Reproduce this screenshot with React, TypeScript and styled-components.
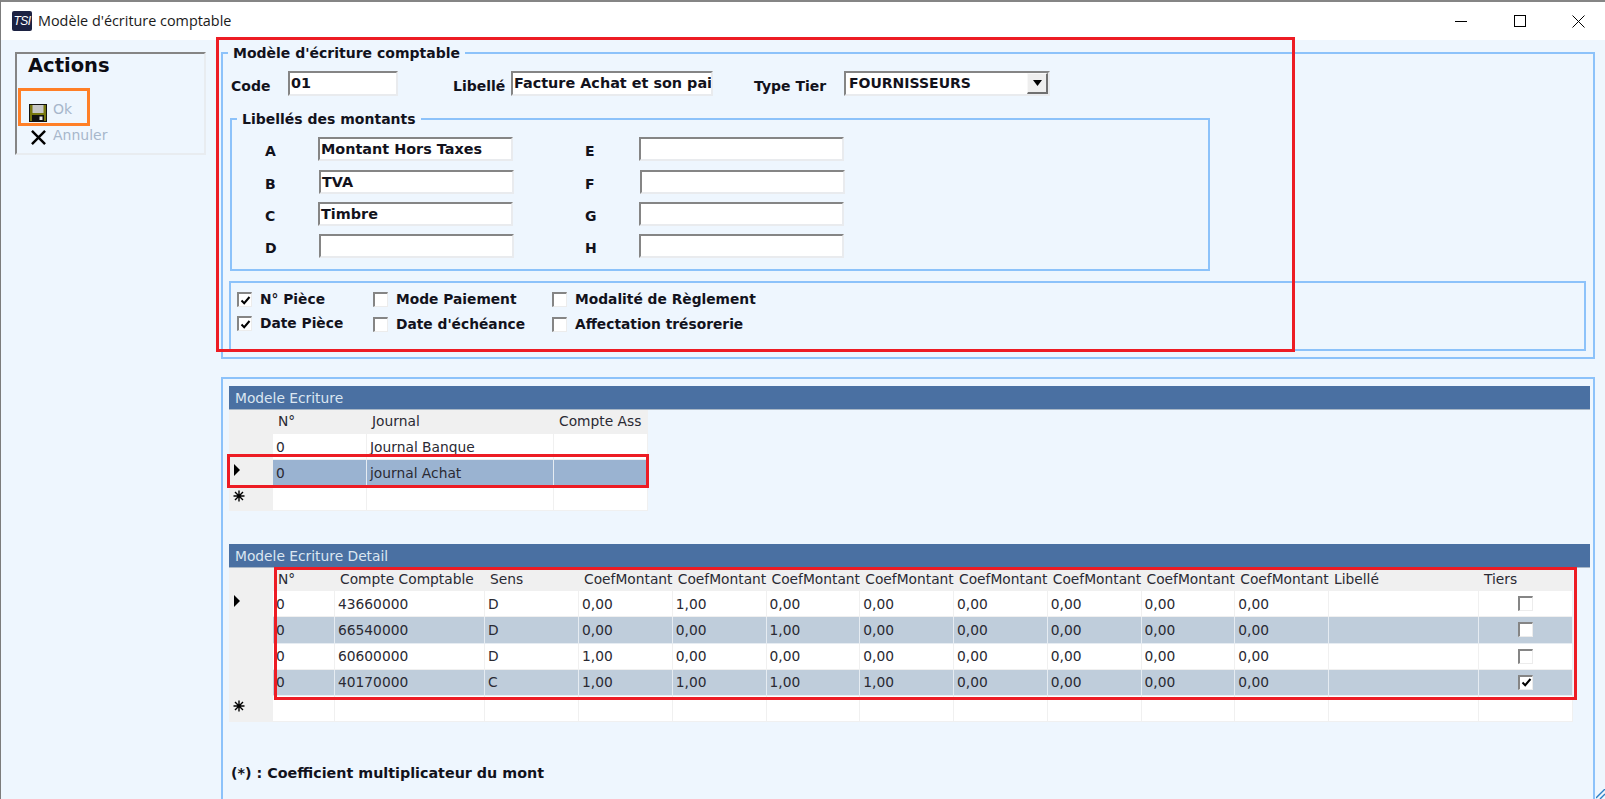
import React from "react";
import styled, { createGlobalStyle } from "styled-components";

const Global = createGlobalStyle`
  html, body { margin: 0; padding: 0; background: #fff; }
  body { font-family: "DejaVu Sans", Verdana, sans-serif; color: #111; }
  * { box-sizing: border-box; }
`;

const Window = styled.div`
  position: relative;
  width: 1605px;
  height: 799px;
  overflow: hidden;
  display: flex;
  flex-direction: column;
  background: #fff;
  border-top: 2px solid #858585;
  border-left: 1px solid #7c7c7c;
`;
const TitleBar = styled.header`
  flex: 0 0 38px;
  display: flex;
  align-items: center;
  padding-left: 11px;
  background: #fff;
`;
const LogoBadge = styled.span`
  width: 20px;
  height: 20px;
  border-radius: 2px;
  background: #1c2242;
  color: #fff;
  font: italic 400 12px/20px "Liberation Sans", sans-serif;
  text-align: center;
  letter-spacing: -0.5px;
`;
const TitleText = styled.span`
  margin-left: 6px;
  font: 400 14.4px/20px "Open Sans", sans-serif;
  color: #1a1a1a;
`;
const Controls = styled.div`
  margin-left: auto;
  margin-right: -3px;
  display: flex;
`;
const Control = styled.span`
  width: 59px;
  height: 38px;
  display: flex;
  align-items: center;
  justify-content: center;
  svg { display: block; }
`;
const Body = styled.div`
  flex: 1;
  min-height: 0;
  display: flex;
  background: #eef6fe;
`;
const Sidebar = styled.aside`
  flex: 0 0 220px;
  padding: 12px 0 0 14px;
`;
const ActionsBox = styled.section`
  width: 191px;
  height: 103px;
  border-style: solid;
  border-width: 2px;
  border-color: #858585 #e8ecf0 #e8ecf0 #858585;
  padding: 0 0 0 11px;
`;
const ActionsTitle = styled.h2`
  margin: 0;
  font: 700 19.5px/24px "DejaVu Sans", sans-serif;
  color: #0c0c14;
`;
const ActionItem = styled.div`
  display: flex;
  align-items: center;
  height: 24px;
  margin-left: 1px;
  font: 400 14px/16px "DejaVu Sans", sans-serif;
  color: #a7b7cb;
  svg { flex: 0 0 auto; }
`;
const ActionsList = styled.div`
  padding-top: 23px;
  display: flex;
  flex-direction: column;
`;
const ActionLabel = styled.span<{ $lift: number }>`
  margin-left: 6px;
  transform: translateY(-${(p) => p.$lift}px);
`;
const IconSlot = styled.span`
  width: 18px;
  height: 18px;
  display: flex;
  align-items: center;
  justify-content: center;
`;
const Main = styled.main`
  flex: 1;
  min-width: 0;
  padding: 12px 10px 0 0;
  display: flex;
  flex-direction: column;
`;
const GroupBox = styled.section`
  position: relative;
  border: 2px solid #8cc2fa;
`;
const Legend = styled.h3`
  position: absolute;
  top: -9px;
  left: 5px;
  margin: 0;
  padding: 0 5px 0 5px;
  background: #eef6fe;
  font: 700 14px/16px "DejaVu Sans", sans-serif;
  color: #12121c;
`;
const FormGroup = styled(GroupBox)`
  height: 307px;
  flex: 0 0 auto;
  padding: 17px 0 0 7px;
`;
const TopRow = styled.div`
  display: flex;
  margin-left: 1px;
  height: 25px;
`;
const FieldLabel = styled.span<{ $width: number; $gap?: number }>`
  flex: 0 0 ${(p) => p.$width}px;
  margin-left: ${(p) => p.$gap ?? 0}px;
  padding-top: 7px;
  font: 700 14px/16px "DejaVu Sans", sans-serif;
  color: #12121c;
`;
const Field = styled.span<{ $width: number; $shift?: number }>`
  flex: 0 0 ${(p) => p.$width}px;
  width: ${(p) => p.$width}px;
  height: 25px;
  margin-left: ${(p) => p.$shift ?? 0}px;
  display: block;
  overflow: hidden;
  white-space: nowrap;
  background: #fff;
  border-style: solid;
  border-width: 2px;
  border-color: #858585 #e9ebee #e9ebee #858585;
  padding: 0 0 0 1px;
  font: 700 14.4px/21px "DejaVu Sans", sans-serif;
  color: #12121c;
`;
const SelectBox = styled.span`
  flex: 0 0 206px;
  height: 25px;
  display: flex;
  justify-content: space-between;
  background: #fff;
  border-style: solid;
  border-width: 2px;
  border-color: #858585 #e9ebee #e9ebee #858585;
  padding-left: 3px;
  font: 700 14px/20px "DejaVu Sans", sans-serif;
  color: #12121c;
`;
const SelectButton = styled.span`
  width: 21px;
  height: 21px;
  background: #eeeeee;
  border-style: solid;
  border-width: 1px 2px 2px 1px;
  border-color: #f8f8f8 #707070 #707070 #f8f8f8;
  display: flex;
  align-items: center;
  justify-content: center;
`;
const AmountsGroup = styled(GroupBox)`
  margin: 22px 0 0 0;
  width: 980px;
  height: 153px;
`;
const AmountsGrid = styled.div`
  display: grid;
  grid-template-columns: 53px 195px 72px 54px 205px;
  grid-template-rows: 33px 32px 32px 24px;
  padding: 17px 0 0 33px;
`;
const AmountLabel = styled.span`
  padding-top: 6px;
  font: 700 14px/16px "DejaVu Sans", sans-serif;
  color: #12121c;
`;
const AmountField = styled(Field)`
  height: 24px;
  line-height: 20px;
`;
const Spacer = styled.span``;
const FlagsGroup = styled(GroupBox)`
  margin: 10px 0 0 -1px;
  width: 1357px;
  height: 70px;
  display: flex;
  padding: 9px 0 0 6px;
`;
const FlagColumn = styled.div<{ $width: number; $gap: number }>`
  flex: 0 0 ${(p) => p.$width}px;
  display: flex;
  flex-direction: column;
  gap: ${(p) => p.$gap}px;
`;
const Flag = styled.div`
  display: flex;
  align-items: center;
  gap: 8px;
  height: 15px;
  font: 700 13.8px/15px "DejaVu Sans", sans-serif;
  color: #12121c;
  white-space: nowrap;
`;
const CheckBox = styled.span`
  flex: 0 0 15px;
  width: 15px;
  height: 15px;
  display: flex;
  align-items: center;
  justify-content: center;
  background: #fff;
  border-style: solid;
  border-width: 2px 1px 1px 2px;
  border-color: #858585 #ececec #ececec #858585;
`;
const GridPanel = styled.section`
  margin-top: 18px;
  flex: 1;
  min-height: 0;
  border-style: solid;
  border-width: 2px 2px 0 2px;
  border-color: #8cc2fa;
  padding: 7px 3px 0 6px;
`;
const GridTitle = styled.div<{ $gap?: number }>`
  height: 24px;
  margin-top: ${(p) => p.$gap ?? 0}px;
  padding-left: 6px;
  background: #4a70a2;
  border-bottom: 1px solid #a9b7c6;
  color: #dbe6f1;
  font: 400 13.8px/25px "DejaVu Sans", sans-serif;
`;
const GridRow = styled.div<{ $cols: string; $h: number }>`
  display: grid;
  grid-template-columns: ${(p) => p.$cols};
  height: ${(p) => p.$h}px;
  width: max-content;
`;
const RowHead = styled.span`
  background: #f0f0f0;
  display: flex;
  align-items: center;
  padding: 0 0 6px 4px;
`;
const HeadCell = styled.span`
  background: #f0f0f0;
  padding-left: 5px;
  font: 400 13.8px/22px "DejaVu Sans", sans-serif;
  color: #2a2a33;
  white-space: nowrap;
`;
const Cell = styled.span<{ $tone: "plain" | "alt" | "selected"; $center?: boolean }>`
  background: ${(p) => (p.$tone === "plain" ? "#fff" : p.$tone === "alt" ? "#bfcddb" : "#9ab3d1")};
  border-right: 1px solid ${(p) => (p.$tone === "plain" ? "#f0f0f0" : "#e6ecf2")};
  border-bottom: 1px solid ${(p) => (p.$tone === "plain" ? "#f0f0f0" : "#e6ecf2")};
  padding-left: ${(p) => (p.$center ? 0 : 3)}px;
  font: 400 13.8px/24px "DejaVu Sans", sans-serif;
  color: #2a2a33;
  display: flex;
  align-items: center;
  justify-content: ${(p) => (p.$center ? "center" : "flex-start")};
  white-space: nowrap;
`;
const Note = styled.p`
  margin: 43px 0 0 2px;
  font: 700 14.3px/16px "DejaVu Sans", sans-serif;
  color: #12121c;
`;
const Marker = styled.div<{ $l: number; $t: number; $w: number; $h: number; $c: string }>`
  position: absolute;
  left: ${(p) => p.$l}px;
  top: ${(p) => p.$t}px;
  width: ${(p) => p.$w}px;
  height: ${(p) => p.$h}px;
  border: 3px solid ${(p) => p.$c};
  pointer-events: none;
`;
const Grip = styled.svg`
  position: absolute;
  right: 0;
  bottom: 0;
`;

const Check = () => (
  <svg width="11" height="11" viewBox="0 0 11 11">
    <path d="M1.5 5.5 L4.2 8.2 L9.5 2" fill="none" stroke="#000" strokeWidth="2" />
  </svg>
);
const Box = ({ on }: { on?: boolean }) => <CheckBox>{on ? <Check /> : null}</CheckBox>;
const Arrow = () => (
  <svg width="8" height="12" viewBox="0 0 8 12">
    <path d="M1 0 L7 6 L1 12 Z" fill="#000" />
  </svg>
);
const Star = () => (
  <svg width="12" height="12" viewBox="0 0 12 12">
    <path d="M6 0.5V11.5M0.5 6H11.5M2 2L10 10M10 2L2 10" stroke="#000" strokeWidth="1.4" />
  </svg>
);
const Floppy = () => (
  <svg width="18" height="18" viewBox="0 0 18 18">
    <rect x="0" y="0" width="18" height="18" fill="#111" />
    <rect x="1" y="1" width="16" height="16" fill="#77770f" />
    <rect x="3.5" y="1" width="11" height="8" fill="#c6c6c6" />
    <rect x="3" y="11" width="12" height="7" fill="#111" />
    <rect x="10.5" y="12.5" width="3" height="3.5" fill="#e8e8e8" />
  </svg>
);
const Cross = () => (
  <svg width="17" height="15" viewBox="0 0 18 16">
    <path d="M2 1 L16 15 M16 1 L2 15" stroke="#000" strokeWidth="2.6" />
  </svg>
);

const amounts: [string, string, number, string, string, number][] = [
  ["A", "Montant Hors Taxes", 0, "E", "", 0],
  ["B", "TVA", 1, "F", "", 1],
  ["C", "Timbre", 0, "G", "", 0],
  ["D", "", 1, "H", "", 0],
];
const cols1 = "44px 94px 187px 94px";
const cols2 = "44px 62px 150px 94px repeat(8, 93.75px) 150px 94px";
const detail: [string, string, string[], boolean][] = [
  ["43660000", "D", ["0,00", "1,00", "0,00", "0,00", "0,00", "0,00", "0,00", "0,00"], false],
  ["66540000", "D", ["0,00", "0,00", "1,00", "0,00", "0,00", "0,00", "0,00", "0,00"], false],
  ["60600000", "D", ["1,00", "0,00", "0,00", "0,00", "0,00", "0,00", "0,00", "0,00"], false],
  ["40170000", "C", ["1,00", "1,00", "1,00", "1,00", "0,00", "0,00", "0,00", "0,00"], true],
];

export default function App() {
  return (
    <>
      <Global />
      <Window>
        <TitleBar>
          <LogoBadge>TSI</LogoBadge>
          <TitleText>Modèle d'écriture comptable</TitleText>
          <Controls>
            <Control>
              <svg width="12" height="12" viewBox="0 0 12 12"><path d="M0 6.5H12" stroke="#000" /></svg>
            </Control>
            <Control>
              <svg width="12" height="12" viewBox="0 0 12 12"><rect x="0.5" y="0.5" width="11" height="11" fill="none" stroke="#000" /></svg>
            </Control>
            <Control>
              <svg width="13" height="13" viewBox="0 0 13 13"><path d="M0.5 0.5L12.5 12.5M12.5 0.5L0.5 12.5" stroke="#000" /></svg>
            </Control>
          </Controls>
        </TitleBar>
        <Body>
          <Sidebar>
            <ActionsBox>
              <ActionsTitle>Actions</ActionsTitle>
              <ActionsList>
                <ActionItem>
                  <IconSlot><Floppy /></IconSlot>
                  <ActionLabel $lift={4}>Ok</ActionLabel>
                </ActionItem>
                <ActionItem>
                  <IconSlot><Cross /></IconSlot>
                  <ActionLabel $lift={2}>Annuler</ActionLabel>
                </ActionItem>
              </ActionsList>
            </ActionsBox>
          </Sidebar>
          <Main>
            <FormGroup>
              <Legend>Modèle d'écriture comptable</Legend>
              <TopRow>
                <FieldLabel $width={57}>Code</FieldLabel>
                <Field $width={110}>01</Field>
                <FieldLabel $width={58} $gap={55}>Libellé</FieldLabel>
                <Field $width={202}>Facture Achat et son pai</Field>
                <FieldLabel $width={90} $gap={41}>Type Tier</FieldLabel>
                <SelectBox>
                  FOURNISSEURS
                  <SelectButton>
                    <svg width="9" height="6" viewBox="0 0 9 6"><path d="M0 0H9L4.5 6Z" fill="#000" /></svg>
                  </SelectButton>
                </SelectBox>
              </TopRow>
              <AmountsGroup>
                <Legend>Libellés des montants</Legend>
                <AmountsGrid>
                  {amounts.map(([l, v, s, r, rv, rs]) => (
                    <React.Fragment key={l}>
                      <AmountLabel>{l}</AmountLabel>
                      <AmountField $width={195} $shift={s}>{v}</AmountField>
                      <Spacer />
                      <AmountLabel>{r}</AmountLabel>
                      <AmountField $width={205} $shift={rs}>{rv}</AmountField>
                    </React.Fragment>
                  ))}
                </AmountsGrid>
              </AmountsGroup>
              <FlagsGroup>
                <FlagColumn $width={136} $gap={9}>
                  <Flag><Box on />N° Pièce</Flag>
                  <Flag><Box on />Date Pièce</Flag>
                </FlagColumn>
                <FlagColumn $width={179} $gap={10}>
                  <Flag><Box />Mode Paiement</Flag>
                  <Flag><Box />Date d'échéance</Flag>
                </FlagColumn>
                <FlagColumn $width={300} $gap={10}>
                  <Flag><Box />Modalité de Règlement</Flag>
                  <Flag><Box />Affectation trésorerie</Flag>
                </FlagColumn>
              </FlagsGroup>
            </FormGroup>
            <GridPanel>
              <GridTitle>Modele Ecriture</GridTitle>
              <GridRow $cols={cols1} $h={24}>
                <RowHead />
                <HeadCell>N°</HeadCell>
                <HeadCell>Journal</HeadCell>
                <HeadCell>Compte Ass</HeadCell>
              </GridRow>
              <GridRow $cols={cols1} $h={26}>
                <RowHead />
                <Cell $tone="plain">0</Cell>
                <Cell $tone="plain">Journal Banque</Cell>
                <Cell $tone="plain" />
              </GridRow>
              <GridRow $cols={cols1} $h={26}>
                <RowHead><Arrow /></RowHead>
                <Cell $tone="selected">0</Cell>
                <Cell $tone="selected">journal Achat</Cell>
                <Cell $tone="selected" />
              </GridRow>
              <GridRow $cols={cols1} $h={25}>
                <RowHead><Star /></RowHead>
                <Cell $tone="plain" />
                <Cell $tone="plain" />
                <Cell $tone="plain" />
              </GridRow>

              <GridTitle $gap={33}>Modele Ecriture Detail</GridTitle>
              <GridRow $cols={cols2} $h={23}>
                <RowHead />
                <HeadCell>N°</HeadCell>
                <HeadCell>Compte Comptable</HeadCell>
                <HeadCell>Sens</HeadCell>
                {Array.from({ length: 8 }, (_, i) => <HeadCell key={i}>CoefMontant</HeadCell>)}
                <HeadCell>Libellé</HeadCell>
                <HeadCell>Tiers</HeadCell>
              </GridRow>
              {detail.map(([account, sens, coefs, tier], i) => {
                const tone = i % 2 ? "alt" : "plain";
                return (
                  <GridRow key={account} $cols={cols2} $h={26.25}>
                    <RowHead>{i === 0 ? <Arrow /> : null}</RowHead>
                    <Cell $tone={tone}>0</Cell>
                    <Cell $tone={tone}>{account}</Cell>
                    <Cell $tone={tone}>{sens}</Cell>
                    {coefs.map((c, j) => <Cell key={j} $tone={tone}>{c}</Cell>)}
                    <Cell $tone={tone} />
                    <Cell $tone={tone} $center><Box on={tier} /></Cell>
                  </GridRow>
                );
              })}
              <GridRow $cols={cols2} $h={26}>
                <RowHead><Star /></RowHead>
                {Array.from({ length: 13 }, (_, i) => <Cell key={i} $tone="plain" />)}
              </GridRow>
              <Note>(*) : Coefficient multiplicateur du mont</Note>
            </GridPanel>
          </Main>
        </Body>
        <Marker $l={215} $t={35} $w={1079} $h={315} $c="#ed1c24" />
        <Marker $l={17} $t={86} $w={72} $h={38} $c="#ff7f27" />
        <Marker $l={226} $t={452} $w={422} $h={34} $c="#ed1c24" />
        <Marker $l={273} $t={565} $w={1303} $h={133} $c="#ed1c24" />
        <Grip width="9" height="10" viewBox="0 0 9 10">
          <path d="M0 9L9 0M4 10L9 5" stroke="#2f7fc4" strokeWidth="1.4" />
        </Grip>
      </Window>
    </>
  );
}
